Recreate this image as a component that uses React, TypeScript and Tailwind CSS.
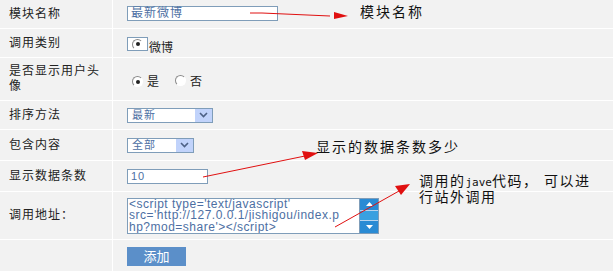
import React from 'react';

const cjk = { fontFamily: '"Liberation Sans", "Noto Sans CJK SC", sans-serif' };

function Row({ label, h, children, last }: { label?: React.ReactNode; h: string; children?: React.ReactNode; last?: boolean }) {
  return (
    <div className={`flex ${h} ${last ? '' : 'border-b border-white'}`}>
      <div className="w-[113px] shrink-0 border-r border-white pl-[9px] flex items-center text-[12px] text-[#222] leading-[15px] tracking-[1px]">
        {label}
      </div>
      <div className="flex-1 pl-[14px] flex items-center">{children}</div>
    </div>
  );
}

function Radio({ checked }: { checked?: boolean }) {
  return (
    <span className="inline-flex w-[11px] h-[11px] rounded-full border border-[#8a8a8a] border-b-white border-r-white items-center justify-center bg-white">
      {checked && <span className="w-[4px] h-[4px] rounded-full bg-[#222]" />}
    </span>
  );
}

function Select({ value, w }: { value: string; w: string }) {
  return (
    <div className={`${w} h-[15px] border border-[#7f9db9] bg-white flex items-center justify-between`}>
      <span className="pl-[4px] text-[11px] text-[#4d6fa3] leading-none tracking-[1px]">{value}</span>
      <span className="w-[17px] h-[13px] bg-[#c1d3fb] flex items-center justify-center">
        <svg width="9" height="6" viewBox="0 0 9 6">
          <path d="M1 1 L4.5 4.5 L8 1" stroke="#4d6185" strokeWidth="1.6" fill="none" />
        </svg>
      </span>
    </div>
  );
}

export default function App() {
  return (
    <div className="relative w-[613px] h-[271px] bg-[#f2f2f2] overflow-hidden" style={cjk}>
      <Row label="模块名称" h="h-[29px]">
        <div className="w-[151px] h-[15px] -mt-[1px] border border-[#7f9db9] bg-white pl-[3px] text-[12px] leading-[13px] text-[#4d6fa3] tracking-[1px]">
          最新微博
        </div>
      </Row>
      <Row label="调用类别" h="h-[29px]">
        <div className="flex items-end">
          <span className="w-[21px] h-[14px] border border-[#7f9db9] bg-white flex items-start justify-center pt-[1px] -mb-[1px]">
            <Radio checked />
          </span>
          <span className="text-[12px] text-[#222] leading-none -mb-[4px] ml-[1px]">微博</span>
        </div>
      </Row>
      <Row
        label={
          <span className="block w-[96px]">
            是否显示用户头
            <br />
            像
          </span>
        }
        h="h-[43px]"
      >
        <div className="flex items-center pl-[5px] mt-[5px] text-[12px] text-[#222]">
          <Radio checked />
          <span className="ml-[4px]">是</span>
          <span className="ml-[16px]">
            <Radio />
          </span>
          <span className="ml-[4px]">否</span>
        </div>
      </Row>
      <Row label="排序方法" h="h-[29px]">
        <Select value="最新" w="w-[86px]" />
      </Row>
      <Row label="包含内容" h="h-[31px]">
        <Select value="全部" w="w-[67px]" />
      </Row>
      <Row label="显示数据条数" h="h-[31px]">
        <div className="w-[81px] h-[15px] border border-[#7f9db9] bg-white pl-[3px] text-[11px] leading-[13px] text-[#4d6fa3] tracking-[1px]">
          10
        </div>
      </Row>
      <Row label="调用地址：" h="h-[48px]">
        <div className="flex h-[36px]">
          <div className="w-[233px] border border-[#7f9db9] bg-white pl-[1px] text-[12px] leading-[11.5px] text-[#4d6fa3] tracking-[0.5px] whitespace-pre overflow-hidden">
            {"<script type='text/javascript'\nsrc='http://127.0.0.1/jishigou/index.p\nhp?mod=share'></script>"}
          </div>
          <div className="w-[19px] flex flex-col border border-[#7f9db9] border-l-0">
            <div className="h-[12px] bg-[#2a8bd4] flex items-center justify-center border-b border-[#b8d4ee]">
              <svg width="7" height="4" viewBox="0 0 7 4"><path d="M0 4 L3.5 0 L7 4 Z" fill="#fff" /></svg>
            </div>
            <div className="flex-1 bg-[#39a0e0] border-b border-[#b8d4ee]" />
            <div className="h-[12px] bg-[#2a8bd4] flex items-center justify-center">
              <svg width="7" height="4" viewBox="0 0 7 4"><path d="M0 0 L3.5 4 L7 0 Z" fill="#fff" /></svg>
            </div>
          </div>
        </div>
      </Row>
      <Row h="h-[31px]" last>
        <button className="w-[59px] h-[19px] mt-[2px] bg-[#5b8fc9] text-white text-[13px] leading-none">添加</button>
      </Row>

      {/* annotations */}
      <svg className="absolute left-0 top-0 pointer-events-none" width="613" height="271">
        <path d="M250 13 L262 13 L330 16" stroke="#e01010" strokeWidth="1" fill="none" />
        <path d="M334 12 L348 16 L334 19 Z" fill="#e01010" />
        <path d="M203 177 L305 156" stroke="#e01010" strokeWidth="1" fill="none" />
        <path d="M302 151 L318 153 L305 160 Z" fill="#e01010" />
        <path d="M335 227 L399 191" stroke="#e01010" strokeWidth="1" fill="none" />
        <path d="M395 186 L410 184 L401 195 Z" fill="#e01010" />
      </svg>
      <div className="absolute left-[360px] top-[5px] text-[14px] text-[#111] leading-none tracking-[2px]">模块名称</div>
      <div className="absolute left-[316px] top-[140px] text-[14px] text-[#111] leading-none tracking-[2px]">显示的数据条数多少</div>
      <div className="absolute left-[419px] top-[174px] text-[14px] text-[#111] leading-[14px] tracking-[1.5px]">
        调用的<span style={{ fontFamily: '"DejaVu Sans Mono", monospace' }} className="text-[11px] tracking-normal">jave</span>代码， 可以进
        <br />
        行站外调用
      </div>
    </div>
  );
}
